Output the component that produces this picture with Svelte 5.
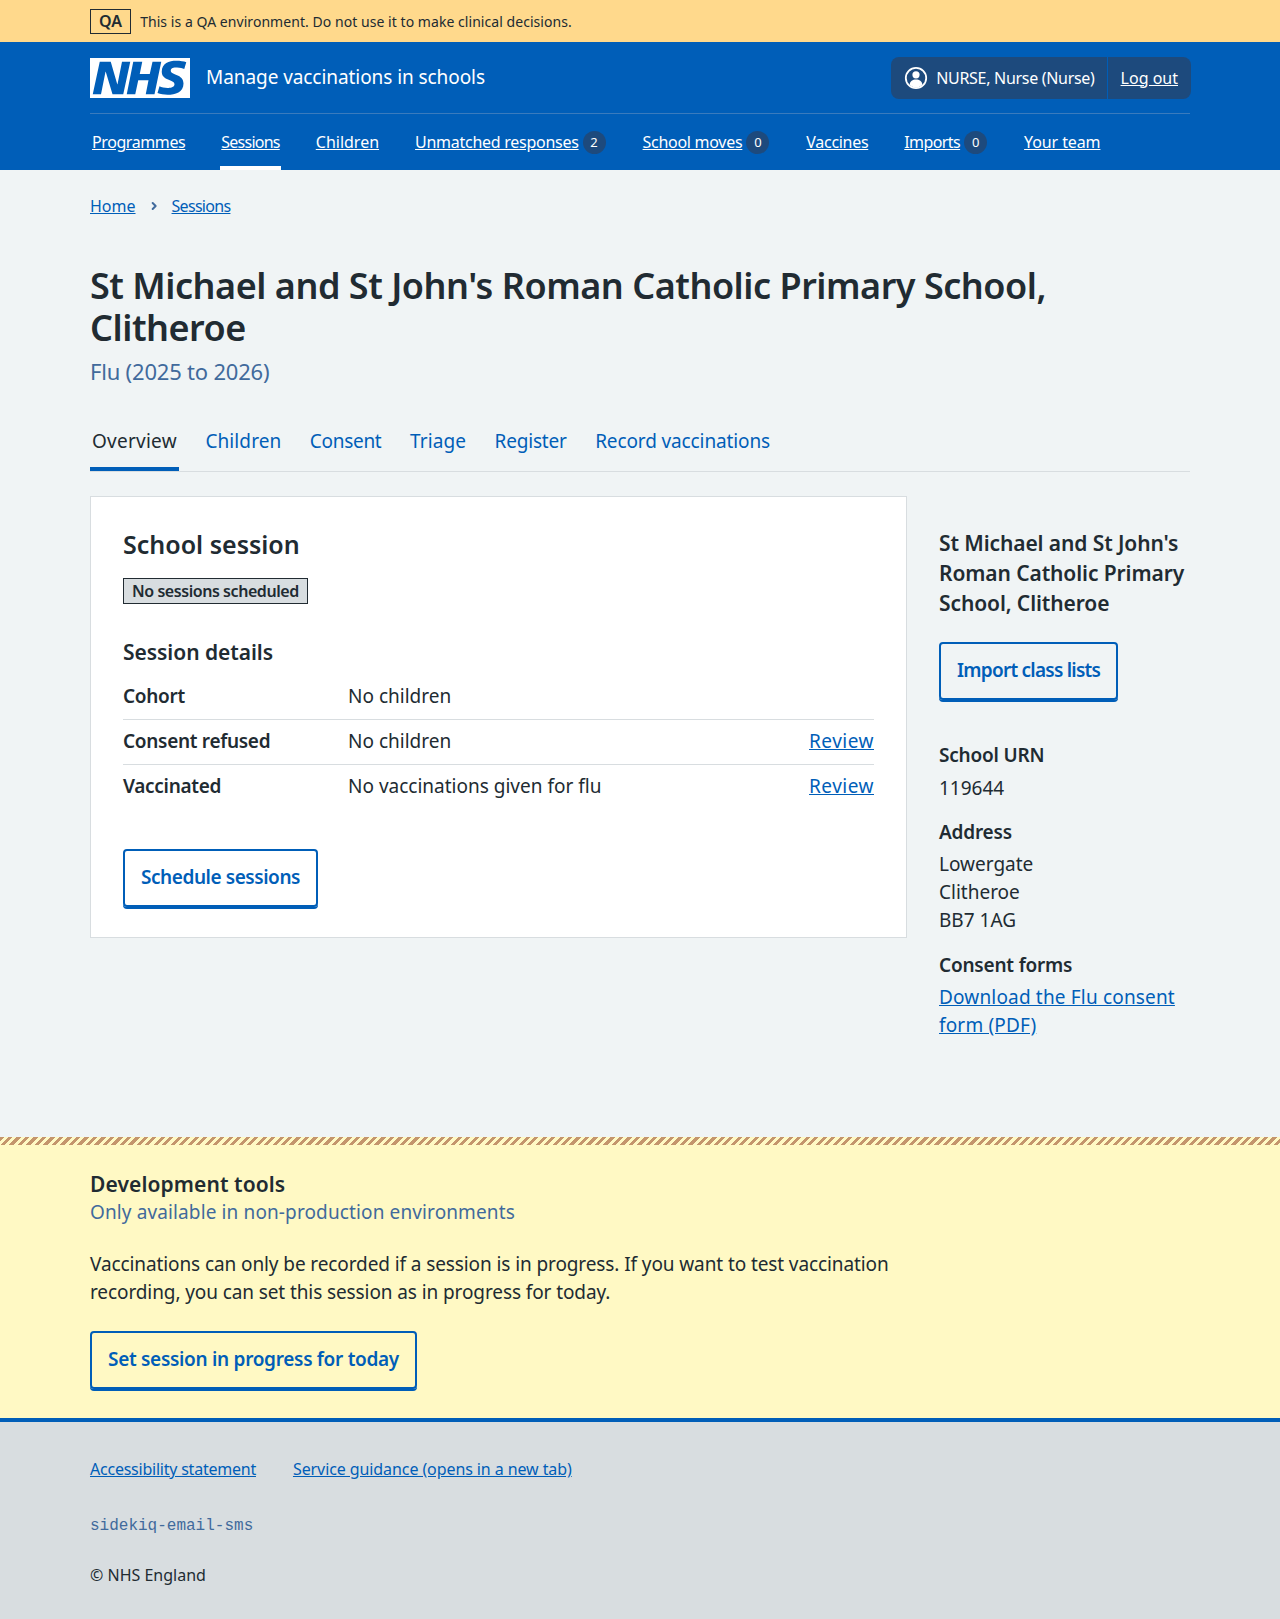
<script>
  // ls = letter-spacing that lines each label up with the reference widths
  const navItems = [
    { label: "Programmes", ls: -0.41 },
    { label: "Sessions", ls: -0.75, active: true },
    { label: "Children", ls: 0 },
    { label: "Unmatched responses", ls: -0.27, count: 2 },
    { label: "School moves", ls: -0.28, count: 0 },
    { label: "Vaccines", ls: -0.3 },
    { label: "Imports", ls: -0.59, count: 0 },
    { label: "Your team", ls: -0.11 },
  ];
  const tabs = [
    { label: "Overview", ls: 0.25 },
    { label: "Children", ls: 0.1 },
    { label: "Consent", ls: -0.3 },
    { label: "Triage", ls: 0.12 },
    { label: "Register", ls: -0.2 },
    { label: "Record vaccinations", ls: -0.12 },
  ];
  const details = [
    { key: "Cohort", value: "No children" },
    { key: "Consent refused", value: "No children", review: true },
    { key: "Vaccinated", value: "No vaccinations given for flu", review: true },
  ];
</script>

<div class="env-banner">
  <div class="container env-inner">
    <strong class="env-tag">QA</strong>
    <span>This is a QA environment. Do not use it to make clinical decisions.</span>
  </div>
</div>

<header class="header">
  <div class="container">
    <div class="header-top">
      <a class="logo" href="#home" aria-label="NHS">
        <svg viewBox="0 0 40 16" width="100" height="40" preserveAspectRatio="none">
          <path fill="#fff" d="M0 0h40v16H0z" />
          <path fill="#005eb8" d="M3.9 1.5h4.4l2.6 9h.1l1.8-9h3.3l-2.8 13H9l-2.7-9h-.1l-1.8 9H1.1M17.3 1.5h3.6l-1 4.9h4L25 1.5h3.5l-2.7 13h-3.5l1.1-5.6h-4.1l-1.2 5.6h-3.4M37.7 4.4c-.7-.3-1.6-.6-2.9-.6-1.4 0-2.5.2-2.5 1.3 0 1.8 5.1 1.2 5.1 5.1 0 3.6-3.3 4.5-6.4 4.5-1.3 0-2.9-.3-4-.7l.8-2.7c.7.4 2.1.7 3.2.7s2.8-.2 2.8-1.5c0-2.1-5.1-1.3-5.1-5 0-3.4 2.9-4.4 5.8-4.4 1.6 0 3.1.2 4 .6" />
        </svg>
      </a>
      <span class="service-name">Manage vaccinations in schools</span>
      <div class="account">
        <div class="account-item">
          <svg class="account-icon" viewBox="0 0 24 24" width="24" height="24">
            <circle cx="12" cy="12" r="10.2" fill="none" stroke="#fff" stroke-width="1.8" />
            <circle cx="12" cy="8.8" r="3.6" fill="#fff" />
            <path fill="#fff" d="M5.6 18.6c.5-3.6 3-5.2 6.4-5.2s5.9 1.6 6.4 5.2c-1.6 2-3.9 3.2-6.4 3.2s-4.8-1.2-6.4-3.2z" />
          </svg>
          <span class="account-name">NURSE, Nurse (Nurse)</span>
        </div>
        <div class="account-item"><a href="#logout">Log out</a></div>
      </div>
    </div>
    <nav class="nav">
      {#each navItems as item}
        <div class="nav-item" class:active={item.active}>
          <a href="#nav" style={`letter-spacing: ${item.ls}px`}>{item.label}</a>
          {#if item.count !== undefined}
            <span class="count">{item.count}</span>
          {/if}
        </div>
      {/each}
    </nav>
  </div>
</header>

<main class="container main">
  <div class="breadcrumb">
    <a href="#home">Home</a>
    <svg viewBox="0 0 24 24" width="16" height="16">
      <path fill="none" stroke="#416a9c" stroke-width="3" stroke-linecap="round" stroke-linejoin="round" d="M10 7.5l4.5 4.5-4.5 4.5" />
    </svg>
    <a class="crumb-last" href="#sessions">Sessions</a>
  </div>

  <h1 class="title">St Michael and St John's Roman Catholic Primary School, Clitheroe</h1>
  <p class="caption">Flu (2025 to 2026)</p>

  <div class="tabs">
    {#each tabs as tab, i}
      {#if i === 0}
        <span class="tab current" style={`letter-spacing: ${tab.ls}px`}>{tab.label}</span>
      {:else}
        <a class="tab" href="#tab" style={`letter-spacing: ${tab.ls}px`}>{tab.label}</a>
      {/if}
    {/each}
  </div>

  <div class="columns">
    <section class="card">
      <h2>School session</h2>
      <strong class="tag">No sessions scheduled</strong>
      <h3>Session details</h3>
      <dl class="summary">
        {#each details as row}
          <div class="row">
            <dt>{row.key}</dt>
            <dd>{row.value}</dd>
            {#if row.review}<a href="#review">Review</a>{/if}
          </div>
        {/each}
      </dl>
      <button class="btn schedule">Schedule sessions</button>
    </section>

    <aside class="side">
      <h3 class="side-title">St Michael and St John's Roman Catholic Primary School, Clitheroe</h3>
      <button class="btn import">Import class lists</button>
      <div class="side-block first">
        <h4>School URN</h4>
        <p>119644</p>
      </div>
      <div class="side-block">
        <h4>Address</h4>
        <p>Lowergate<br />Clitheroe<br />BB7 1AG</p>
      </div>
      <div class="side-block last">
        <h4>Consent forms</h4>
        <p><a class="pdf" href="#pdf">Download the Flu consent form (PDF)</a></p>
      </div>
    </aside>
  </div>
</main>

<section class="dev">
  <div class="container dev-inner">
    <h3>Development tools</h3>
    <p class="dev-sub">Only available in non-production environments</p>
    <p class="dev-text">Vaccinations can only be recorded if a session is in progress. If you want to test vaccination recording, you can set this session as in progress for today.</p>
    <button class="btn progress">Set session in progress for today</button>
  </div>
</section>

<footer class="footer">
  <div class="container">
    <div class="footer-links">
      <a class="a11y" href="#a11y">Accessibility statement</a>
      <a href="#guidance">Service guidance (opens in a new tab)</a>
    </div>
    <code>sidekiq-email-sms</code>
    <p class="copyright">© NHS England</p>
  </div>
</footer>

<style>
  :global(body) {
    margin: 0;
    background: #f0f4f5;
    color: #212b32;
    font-family: "Noto Sans", "Open Sans", sans-serif;
    font-size: 19px;
    line-height: 28px;
  }

  a {
    color: #005eb8;
  }

  .container {
    width: 1100px;
    margin: 0 auto;
  }

  .env-banner {
    background: #ffd98c;
    height: 42px;
    font-size: 14px;
    letter-spacing: 0.05px;
  }

  .env-inner {
    display: flex;
    align-items: center;
    gap: 9px;
    height: 42px;
  }

  .env-inner span {
    padding-top: 1px;
  }

  .env-tag {
    border: 1px solid #212b32;
    height: 23px;
    line-height: 23px;
    padding: 0 8px;
    font-size: 16px;
    font-weight: 600;
  }

  .header {
    background: #005eb8;
    color: #fff;
    height: 128px;
  }

  .header a {
    color: #fff;
  }

  .header-top {
    display: flex;
    align-items: center;
    height: 71px;
    border-bottom: 1px solid #3a7bbd;
  }

  .logo {
    display: flex;
    height: 40px;
    margin-right: 16px;
  }

  .service-name {
    font-size: 19px;
    letter-spacing: -0.07px;
    margin-bottom: 2px;
  }

  .account {
    margin-left: auto;
    display: flex;
    height: 42px;
    margin-right: -1px;
    background: #1d4a7d;
    border-radius: 8px;
    font-size: 16px;
  }

  .account-item {
    display: flex;
    align-items: center;
    gap: 8px;
    padding: 0 12px 0 13px;
  }

  .account-item + .account-item {
    border-left: 1px solid #005eb8;
    padding: 0 13px 0 13px;
  }

  .account-name {
    letter-spacing: -0.3px;
  }

  .nav {
    display: flex;
    height: 56px;
    padding-left: 2px;
    gap: 36px;
    font-size: 16px;
  }

  .nav-item {
    position: relative;
    display: flex;
    align-items: center;
    gap: 4px;
  }

  .nav-item.active::after {
    content: "";
    position: absolute;
    left: -1px;
    right: -1px;
    bottom: 0;
    height: 4px;
    background: #fff;
  }

  .count {
    width: 23px;
    height: 23px;
    margin-right: 1px;
    border-radius: 50%;
    background: #1d4a7d;
    font-size: 13px;
    line-height: 23px;
    text-align: center;
  }

  .breadcrumb {
    display: flex;
    align-items: center;
    gap: 10px;
    padding-top: 23px;
    font-size: 16px;
    line-height: 26px;
  }

  .crumb-last {
    letter-spacing: -0.7px;
  }

  .title {
    margin: 46px 0 0;
    font-size: 36px;
    line-height: 42px;
    font-weight: 600;
    letter-spacing: -0.48px;
  }

  .caption {
    margin: 7px 0 0;
    font-size: 22px;
    line-height: 30px;
    color: #416a9c;
    letter-spacing: -0.2px;
  }

  .tabs {
    display: flex;
    gap: 24.5px;
    margin-top: 24px;
    height: 61px;
    border-bottom: 1px solid #d8dde0;
  }

  .tab {
    display: block;
    padding: 17px 2px 0;
    height: 40px;
    text-decoration: none;
  }

  .tab.current {
    border-bottom: 4px solid #005eb8;
  }

  .columns {
    display: grid;
    grid-template-columns: 817px 251px;
    gap: 32px;
    align-items: start;
    margin-top: 24px;
    padding-bottom: 98px;
  }

  .card {
    background: #fff;
    border: 1px solid #d8dde0;
    padding: 32px;
    height: 376px;
  }

  h2 {
    margin: 0;
    font-size: 25px;
    line-height: 31px;
    font-weight: 600;
  }

  h3 {
    margin: 0;
    font-size: 21px;
    line-height: 30px;
    font-weight: 600;
  }

  .tag {
    display: block;
    width: fit-content;
    margin-top: 18px;
    padding: 0 8px;
    height: 24px;
    line-height: 24px;
    background: #d8dde0;
    border: 1px solid #212b32;
    font-size: 16px;
    font-weight: 600;
    letter-spacing: -0.44px;
  }

  .card h3 {
    margin-top: 33px;
    letter-spacing: -0.05px;
  }

  .summary {
    margin: 8px 0 40px;
    font-size: 19px;
  }

  .row {
    display: flex;
    padding: 7px 0 9px;
    line-height: 28px;
    border-bottom: 1px solid #d8dde0;
  }

  .row:last-child {
    border-bottom: none;
  }

  .row a {
    letter-spacing: 0.5px;
  }

  dt {
    width: 225px;
    font-weight: 600;
    letter-spacing: -0.3px;
  }

  dd {
    margin: 0;
    flex: 1;
  }

  .btn {
    display: block;
    font-family: inherit;
    font-size: 19px;
    font-weight: 600;
    line-height: 28px;
    color: #005eb8;
    background: transparent;
    border: 2px solid #005eb8;
    border-radius: 4px;
    box-shadow: 0 2px 0 #005eb8;
    padding: 11px 16px 13px;
    height: 58px;
  }

  .schedule {
    letter-spacing: -0.44px;
  }

  .import {
    letter-spacing: -0.75px;
  }

  .progress {
    letter-spacing: -0.3px;
  }

  .side {
    padding-top: 32px;
  }

  .side-title {
    letter-spacing: -0.1px;
  }

  .side .btn {
    margin-top: 24px;
  }

  .side-block {
    margin-top: 16px;
  }

  .side-block.first {
    margin-top: 41px;
  }

  .side-block.first h4 {
    margin-bottom: 5px;
  }

  .side-block.last {
    margin-top: 17px;
  }

  h4 {
    margin: 0 0 4px;
    font-size: 19px;
    line-height: 28px;
    font-weight: 600;
    letter-spacing: -0.2px;
  }

  .side-block p {
    margin: 0;
  }

  .pdf {
    letter-spacing: 0.17px;
  }

  .dev {
    position: relative;
    background: #fff9c4;
    padding-top: 8px;
    border-bottom: 4px solid #005eb8;
  }

  .dev::before {
    content: "";
    position: absolute;
    inset: 0 0 auto 0;
    height: 8px;
    background: repeating-linear-gradient(135deg, #c4956c 0 3px, #fff9c4 3px 6px);
  }

  .dev-inner {
    padding: 24px 0 29px;
  }

  .dev-inner h3 {
    letter-spacing: 0.1px;
  }

  .dev-sub {
    margin: 1px 0 0;
    color: #416a9c;
    line-height: 24px;
    letter-spacing: 0.12px;
  }

  .dev-text {
    margin: 26px 0 25px;
    width: 817px;
    letter-spacing: -0.1px;
  }

  .footer {
    background: #d8dde0;
    padding-top: 33px;
    height: 201px;
    box-sizing: border-box;
    font-size: 16px;
  }

  .footer-links {
    display: flex;
    gap: 37px;
    letter-spacing: -0.09px;
  }

  .a11y {
    letter-spacing: -0.23px;
  }

  code {
    display: block;
    margin-top: 29px;
    font-family: "Liberation Mono", monospace;
    font-size: 16px;
    color: #416a9c;
  }

  .copyright {
    margin: 21px 0 0;
  }
</style>
